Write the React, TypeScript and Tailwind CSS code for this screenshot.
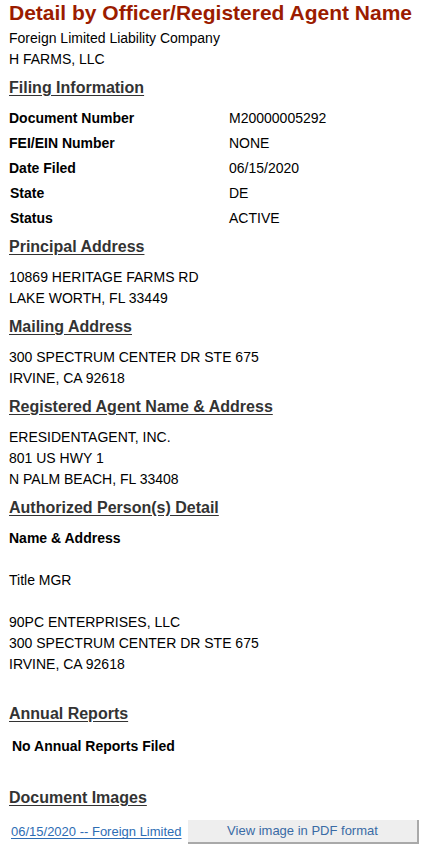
const font = { fontFamily: '"Liberation Sans", Arial, sans-serif' };

function Heading({ children, className = '' }: { children: React.ReactNode; className?: string }) {
  return (
    <h2 className={`text-[16px] leading-[20px] font-bold text-[#333333] underline underline-offset-[2px] ${className}`}>
      {children}
    </h2>
  );
}

function Lines({ lines, className = '' }: { lines: string[]; className?: string }) {
  return (
    <div className={`text-[14px] leading-[21px] text-black ${className}`}>
      {lines.map((l, i) => (
        <div key={i}>{l}</div>
      ))}
    </div>
  );
}

const filing: [string, string, boolean?][] = [
  ['Document Number', 'M20000005292'],
  ['FEI/EIN Number', 'NONE'],
  ['Date Filed', '06/15/2020'],
  ['State', 'DE', true],
  ['Status', 'ACTIVE', true],
];

export default function App() {
  return (
    <div className="min-h-screen bg-white px-[9px] pt-[1px]" style={font}>
      <h1 className="text-[21px] leading-[24px] font-bold text-[#9b1c00]">
        Detail by Officer/Registered Agent Name
      </h1>
      <Lines lines={['Foreign Limited Liability Company', 'H FARMS, LLC']} className="mt-[3px]" />

      <Heading className="mt-[8px]">Filing Information</Heading>
      <div className="mt-[7.5px] text-[14px]">
        {filing.map(([label, value, shift]) => (
          <div key={label} className="flex h-[25px] items-center">
            <span className={`w-[220px] font-bold ${shift ? 'pl-[1px]' : ''}`}>{label}</span>
            <span>{value}</span>
          </div>
        ))}
      </div>

      <Heading className="mt-[6.5px]">Principal Address</Heading>
      <Lines lines={['10869 HERITAGE FARMS RD', 'LAKE WORTH, FL 33449']} className="mt-[9.5px]" />

      <Heading className="mt-[8.5px]">Mailing Address</Heading>
      <Lines lines={['300 SPECTRUM CENTER DR STE 675', 'IRVINE, CA 92618']} className="mt-[9.5px]" />

      <Heading className="mt-[8.5px]">Registered Agent Name &amp; Address</Heading>
      <Lines
        lines={['ERESIDENTAGENT, INC.', '801 US HWY 1', 'N PALM BEACH, FL 33408']}
        className="mt-[9.5px]"
      />

      <Heading className="mt-[8.5px]">Authorized Person(s) Detail</Heading>
      <div className="mt-[9.5px] text-[14px] leading-[21px] font-bold">Name &amp; Address</div>
      <Lines lines={['Title MGR']} className="mt-[21px]" />
      <Lines
        lines={['90PC ENTERPRISES, LLC', '300 SPECTRUM CENTER DR STE 675', 'IRVINE, CA 92618']}
        className="mt-[21px]"
      />

      <Heading className="mt-[29.5px]">Annual Reports</Heading>
      <div className="mt-[11.5px] pl-[3px] text-[14px] leading-[21px] font-bold">No Annual Reports Filed</div>

      <Heading className="mt-[31.5px]">Document Images</Heading>
      <div className="mt-[12px] flex items-center pl-[2px] text-[13px]">
        <a
          href="#"
          className="w-[177px] shrink-0 whitespace-nowrap text-[#2e6db4] underline underline-offset-[2px]"
        >
          06/15/2020 -- Foreign Limited
        </a>
        <button className="h-[24px] w-[231px] shrink-0 border-r-2 border-b-2 border-[#a9a9a9] bg-[#eeeeee] text-[13px] text-[#3a6ba5]">
          View image in PDF format
        </button>
      </div>
    </div>
  );
}
